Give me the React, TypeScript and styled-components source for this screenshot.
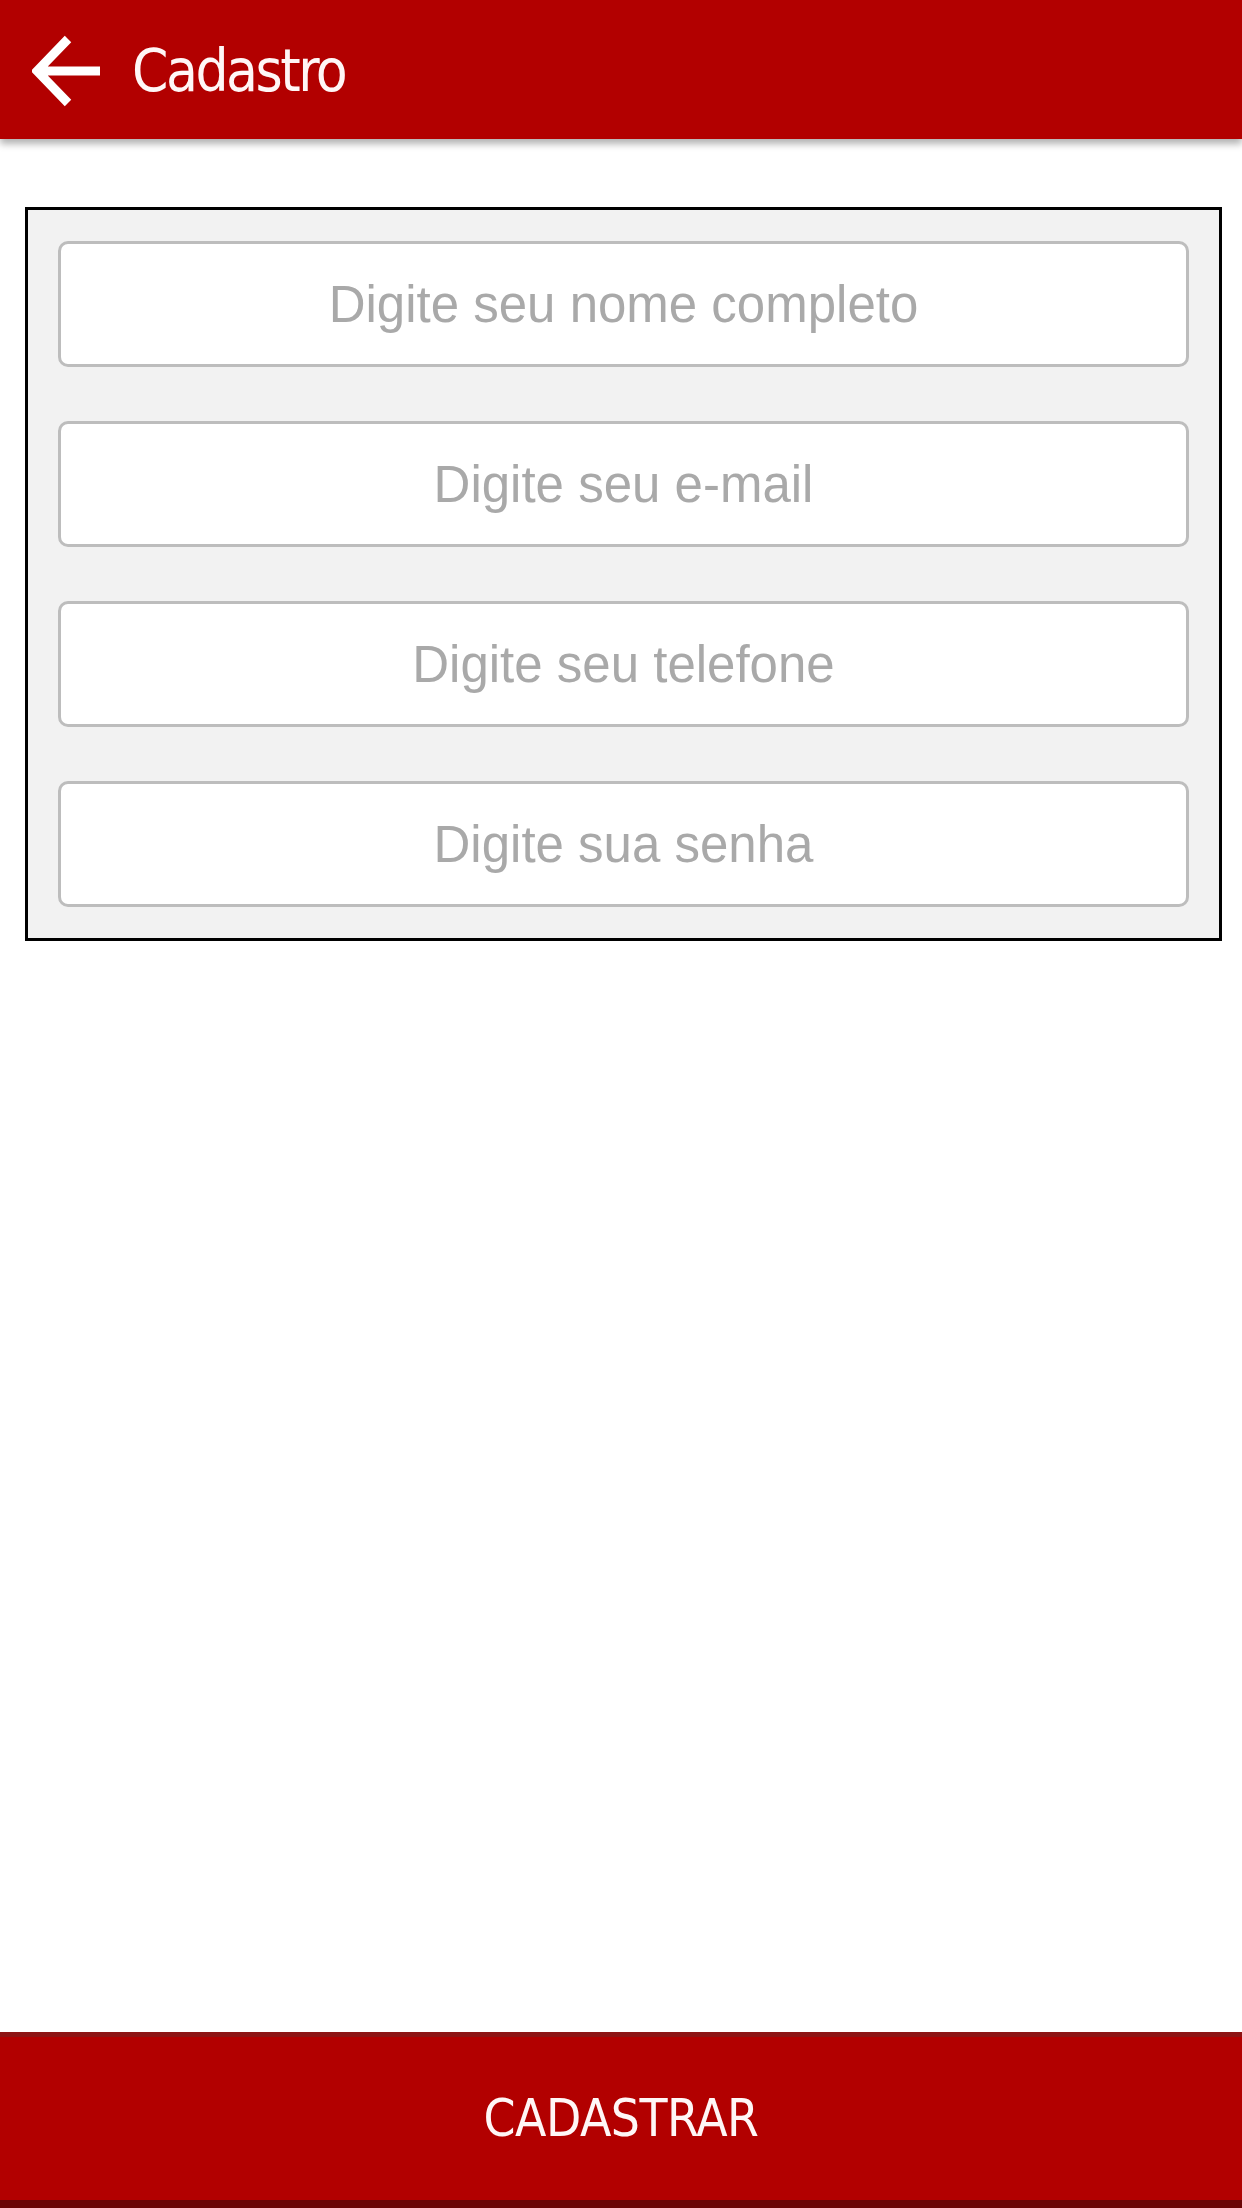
import React from 'react'
import styled, { createGlobalStyle } from 'styled-components'

const GlobalStyle = createGlobalStyle`
  html, body {
    margin: 0;
    padding: 0;
    background: #ffffff;
    font-family: "Liberation Sans", Arial, sans-serif;
  }
  * { box-sizing: border-box; }
`

const fields = [
  'Digite seu nome completo',
  'Digite seu e-mail',
  'Digite seu telefone',
  'Digite sua senha',
]

export default function App() {
  return (
    <>
      <GlobalStyle />
      <Screen>
        <Header>
          <BackButton aria-label="Voltar">
            <svg width="70" height="72" viewBox="0 0 70 72" fill="none">
              <path
                d="M36 4 L5 36 L36 68 M5 36 L68 36"
                stroke="#ffffff"
                strokeWidth="9"
                strokeLinecap="butt"
                strokeLinejoin="miter"
              />
            </svg>
          </BackButton>
          <Title>Cadastro</Title>
        </Header>

        <Content>
          <FormCard>
            {fields.map((f) => (
              <Field key={f} placeholder={f} />
            ))}
          </FormCard>
        </Content>

        <SubmitButton>CADASTRAR</SubmitButton>
      </Screen>
    </>
  )
}

const Screen = styled.div`
  width: 1242px;
  height: 2208px;
  display: flex;
  flex-direction: column;
  background: #ffffff;
  overflow: hidden;
`

const Header = styled.header`
  height: 139px;
  flex-shrink: 0;
  background: #b20000;
  display: flex;
  align-items: center;
  padding-left: 32px;
  gap: 30px;
  box-shadow: 0 5px 7px rgba(0, 0, 0, 0.3);
  position: relative;
  z-index: 1;
`

const BackButton = styled.button`
  border: none;
  background: transparent;
  padding: 0;
  display: flex;
  align-items: center;
  cursor: pointer;
  margin-top: 2px;
`

const Title = styled.h1`
  margin: 0;
  color: #fff6f6;
  font-family: "DejaVu Sans Condensed", "Liberation Sans", sans-serif;
  font-weight: normal;
  font-size: 58px;
  letter-spacing: -2.5px;
  margin-top: 2px;
`

const Content = styled.main`
  flex: 1;
  padding: 68px 20px 0 25px;
`

const FormCard = styled.div`
  border: 3px solid #000000;
  background: #f2f2f2;
  padding: 31px 30px 31px 30px;
  display: flex;
  flex-direction: column;
  gap: 54px;
`

const Field = styled.input`
  height: 126px;
  width: 100%;
  border: 3px solid #bdbdbd;
  border-radius: 10px;
  background: #ffffff;
  font-family: "Liberation Sans", Arial, sans-serif;
  font-size: 51px;
  text-align: center;
  color: #555;
  outline: none;
  &::placeholder {
    color: #a9a9a9;
  }
`

const SubmitButton = styled.button`
  height: 176px;
  flex-shrink: 0;
  width: 100%;
  border: none;
  border-top: 5px solid #8d1414;
  border-bottom: 8px solid #6a0606;
  background: #b20000;
  color: #fff6f6;
  font-family: "DejaVu Sans Condensed", "Liberation Sans", sans-serif;
  font-size: 51px;
  letter-spacing: -0.5px;
  cursor: pointer;
  padding: 0;
`
